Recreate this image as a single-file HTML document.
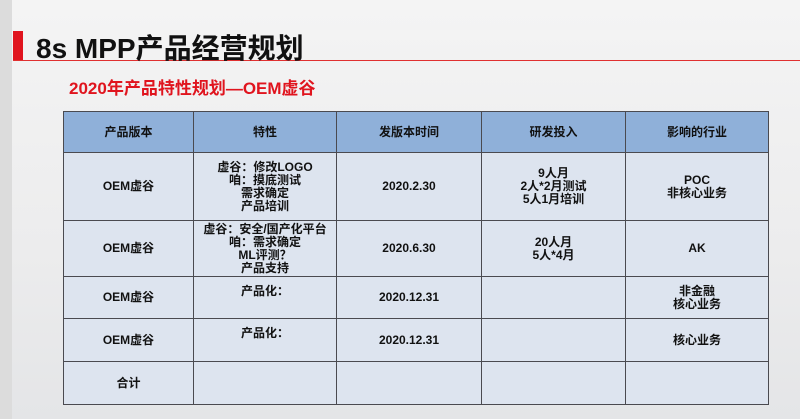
<html><head><style>
body{margin:0;width:800px;height:419px;overflow:hidden;background:linear-gradient(180deg,#f4f4f4,#ececed 60%,#e4e5e7);font-family:"Liberation Sans","Noto Sans CJK SC",sans-serif;position:relative}
.strip{position:absolute;left:0;top:0;width:12px;height:419px;background:#dcdcdc}
.bar{position:absolute;left:13px;top:31px;width:10px;height:30px;background:#e0141e}
.line{position:absolute;left:13px;top:60px;width:787px;height:1px;background:#e03030}
h1{position:absolute;left:36px;top:27px;margin:0;font-size:28px;font-weight:bold;color:#111}
h2{position:absolute;left:69px;top:74px;margin:0;font-size:17px;font-weight:bold;color:#e0141e}
table{position:absolute;left:63px;top:111px;border-collapse:collapse;width:706px;font-size:12px;font-weight:bold;color:#111}
td{border:1px solid #4a4a50;text-align:center;background:#dde4ef;line-height:13px;padding:0}
tr.h td{background:#8fb0d9;height:41px}
</style></head><body>
<div class="strip"></div><div class="bar"></div><div class="line"></div>
<h1>8s MPP产品经营规划</h1>
<h2>2020年产品特性规划—OEM虚谷</h2>
<table>
<tr class="h"><td style="width:129px">产品版本</td><td style="width:142px">特性</td><td style="width:144px">发版本时间</td><td style="width:143px">研发投入</td><td>影响的行业</td></tr>
<tr style="height:68px"><td>OEM虚谷</td><td>虚谷：修改LOGO<br>咱：摸底测试<br>需求确定<br>产品培训</td><td>2020.2.30</td><td>9人月<br>2人*2月测试<br>5人1月培训</td><td>POC<br>非核心业务</td></tr>
<tr style="height:56px"><td>OEM虚谷</td><td>虚谷：安全/国产化平台<br>咱：需求确定<br>ML评测？<br>产品支持</td><td>2020.6.30</td><td>20人月<br>5人*4月</td><td>AK</td></tr>
<tr style="height:42px"><td>OEM虚谷</td><td style="vertical-align:top;padding-top:8px">产品化：</td><td>2020.12.31</td><td></td><td>非金融<br>核心业务</td></tr>
<tr style="height:43px"><td>OEM虚谷</td><td style="vertical-align:top;padding-top:8px">产品化：</td><td>2020.12.31</td><td></td><td>核心业务</td></tr>
<tr style="height:43px"><td>合计</td><td></td><td></td><td></td><td></td></tr>
</table>
</body></html>
